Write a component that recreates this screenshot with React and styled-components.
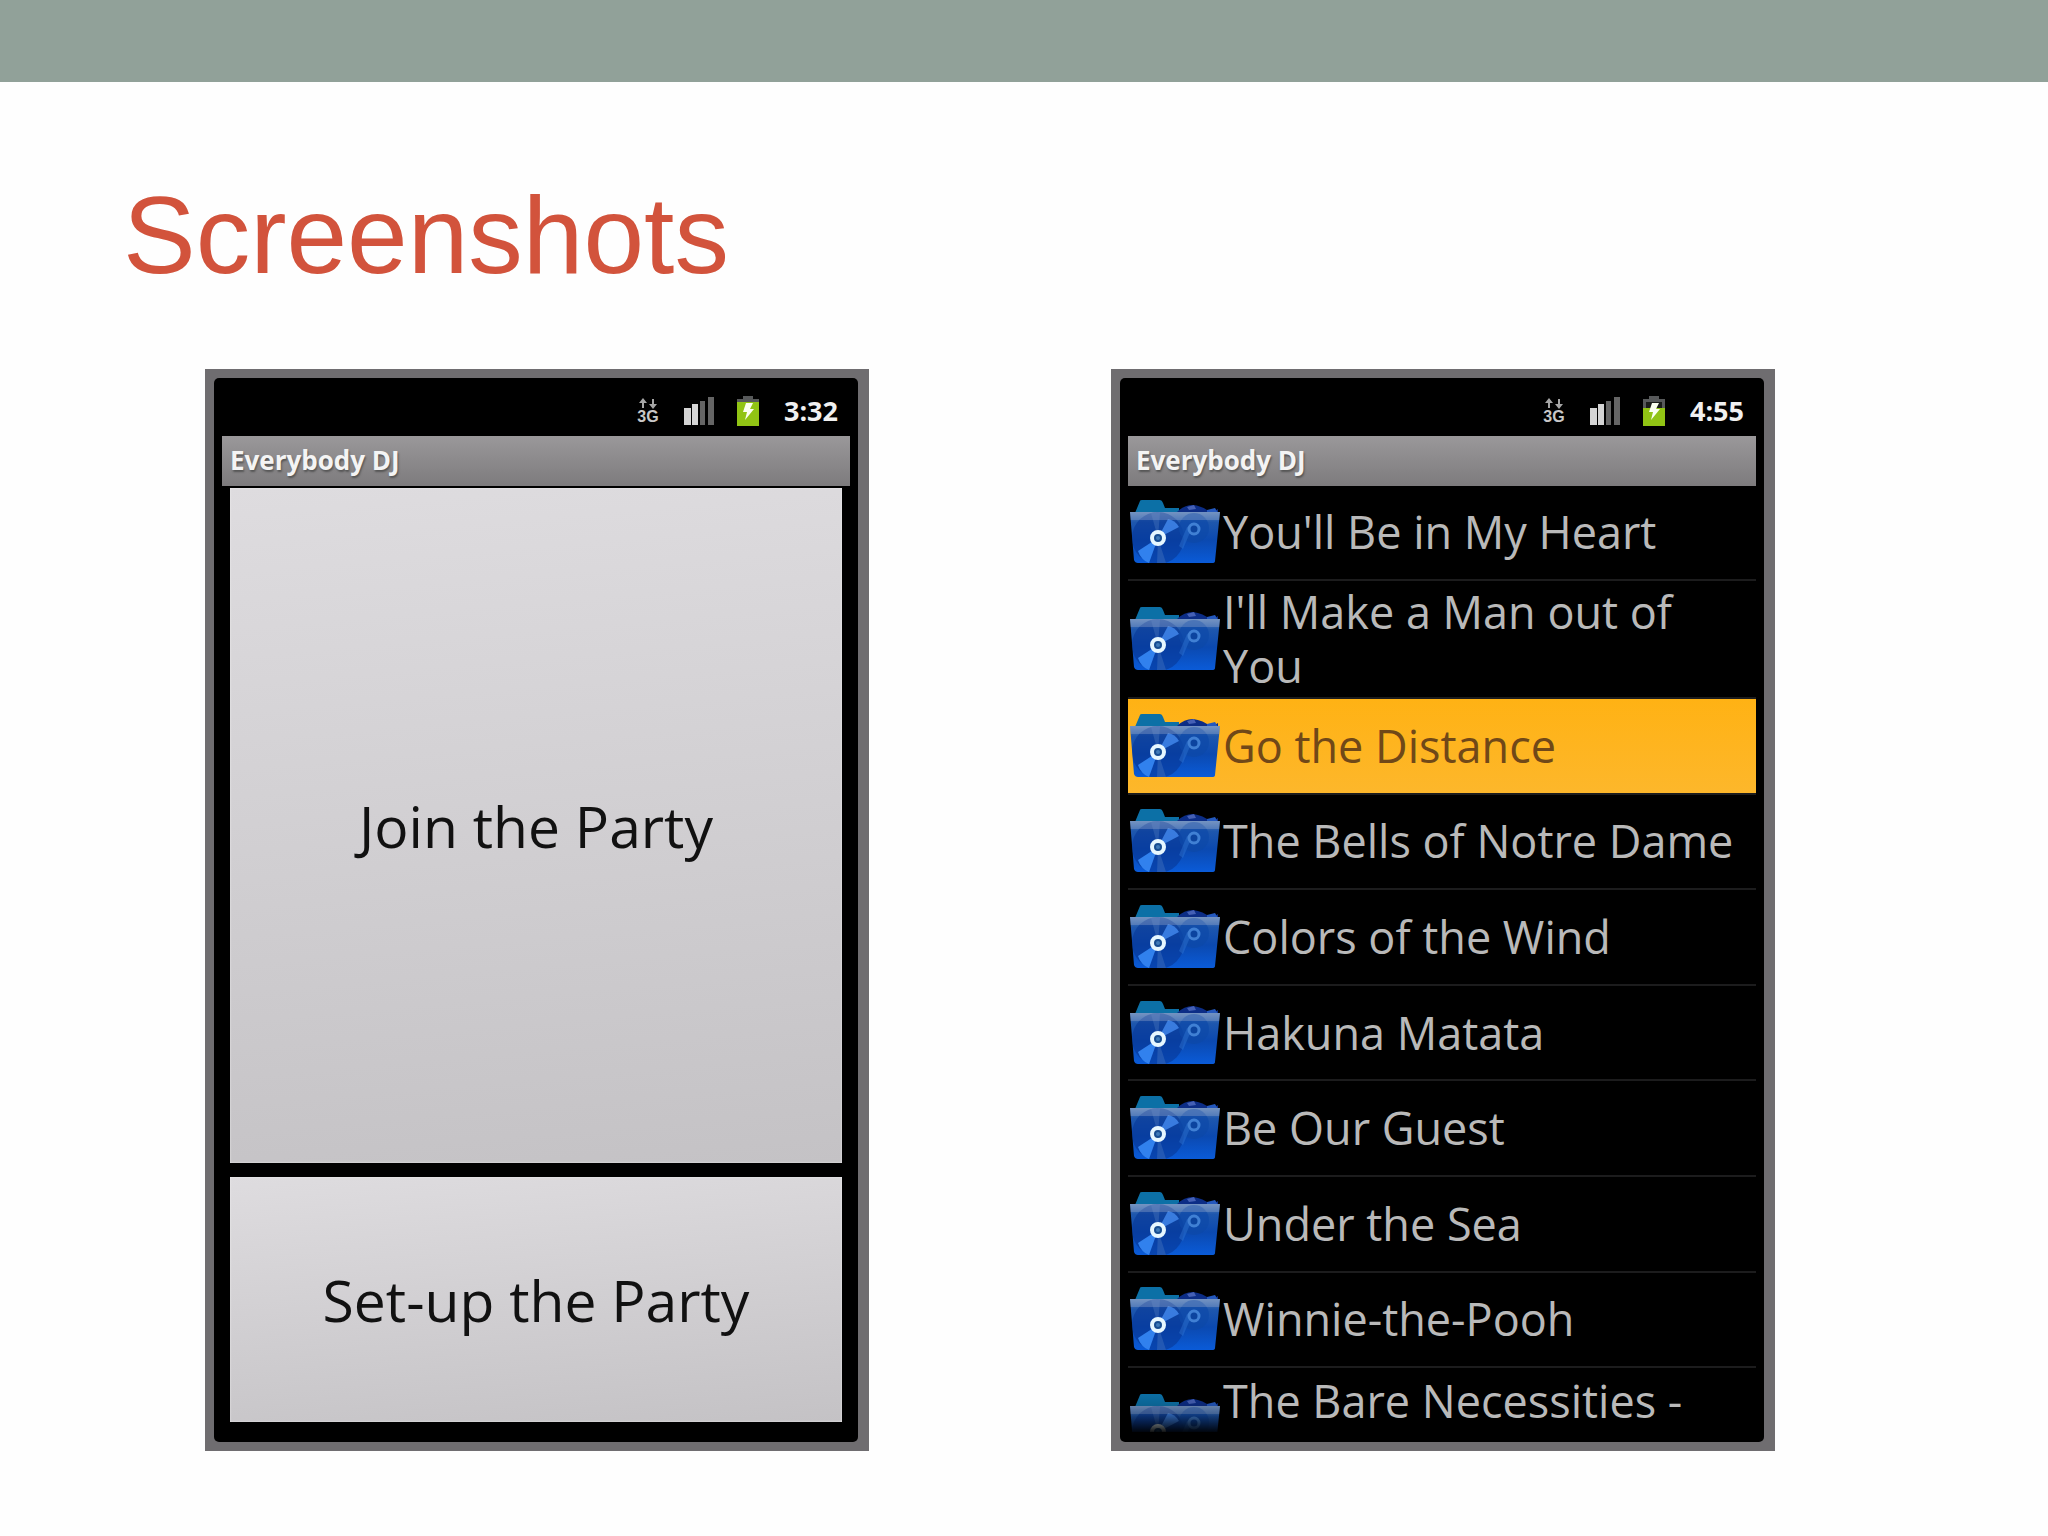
import React from 'react';
import { useId } from 'react';
import styled, { createGlobalStyle } from 'styled-components';

const GlobalStyle = createGlobalStyle`
  * {
    box-sizing: border-box;
  }

  body {
    margin: 0;
    background: #fefefe;
    font-family: "Open Sans", "Noto Sans", sans-serif;
  }
`

const TopBar = styled.header`
  height: 82px;
  background: #91a199;
`

const Title = styled.h1`
  margin: 0;
  padding: 93px 123px 74px;
  color: #d2533c;
  font-family: "Liberation Sans", Arial, sans-serif;
  font-size: 109px;
  font-weight: 400;
  line-height: 120px;
`

const Phones = styled.main`
  display: grid;
  grid-template-columns: 1fr 1fr;
  gap: 242px;
  padding: 0 273px 85px 205px;
`

const Phone = styled.section`
  aspect-ratio: 664 / 1082;
  min-width: 0;
  padding: 9px 11px 9px 9px;
  background: #6f6d70;
`

const Screen = styled.div`
  display: flex;
  flex-direction: column;
  height: 100%;
  padding: 0 8px 8px;
  border-radius: 5px;
  background: #000;
`

const StatusBar = styled.div`
  display: flex;
  flex: none;
  align-items: center;
  justify-content: flex-end;
  height: 58px;
  padding: 8px 12px 0 0;
`

const Network = styled.div`
  display: flex;
  flex-direction: column;
  align-items: center;
  width: 22px;
  margin-right: 24px;
  color: #c8c8c8;
  font-family: "Liberation Sans", Arial, sans-serif;
  font-size: 16px;
  font-weight: 700;
  line-height: 16px;
`

const Battery = styled.svg`
  margin: 0 24px 0 21px;
`

const Time = styled.time`
  color: #f0f0f0;
  font-size: 27px;
  font-weight: 700;
  line-height: 32px;
`

const AppBar = styled.h2`
  flex: none;
  height: 50px;
  margin: 0;
  padding: 0 8px;
  background: linear-gradient(#9a989a, #7d7b7d);
  color: #f4f4f4;
  font-size: 26px;
  font-weight: 700;
  line-height: 48px;
  text-shadow: 1px 2px 2px #555;
`

const Menu = styled.div`
  display: flex;
  flex: 1;
  flex-direction: column;
  gap: 14px;
  min-height: 0;
  padding: 2px 8px 12px;
`

const MenuButton = styled.button`
  flex: ${(props) => props.$share} 1 0;
  min-height: 0;
  padding: 0;
  border: 0;
  background: linear-gradient(175deg, #dedcdf, #d1cfd2 50%, #c4c2c5);
  box-shadow: inset 0 0 2px #f4f4f4;
  color: #111;
  font-family: inherit;
  font-size: 57px;
  line-height: 68px;
`

/* the last row is cut by the bottom of the screen */
const SongList = styled.ul`
  display: grid;
  flex: 1;
  grid-template-rows: 95fr 119fr repeat(7, 96fr) 66fr;
  min-height: 0;
  margin: 0;
  padding: 0;
  list-style: none;
`

const SongItem = styled.li`
  min-height: 0;
  overflow: hidden;
  border-bottom: 2px solid ${(props) => (props.$last ? '#000' : '#1c1c1d')};
`

const Song = styled.button`
  display: flex;
  align-items: center;
  gap: 2px;
  width: 100%;
  height: ${(props) => (props.$cut ? '116px' : '100%')};
  padding: 0 0 0 1px;
  border: 0;
  background: ${(props) => (props.$active ? 'linear-gradient(#ffb214, #fdb72b)' : '#000')};
  color: ${(props) => (props.$active ? '#704818' : '#b9b9b9')};
  font-family: inherit;
  font-size: 45px;
  line-height: 54px;
  text-align: left;
`

const SongName = styled.span`
  flex: 1;
  align-self: ${(props) => (props.$cut ? 'flex-start' : 'center')};
  min-width: 0;
  padding-top: ${(props) => (props.$cut ? '6px' : '0')};
`

const FolderSvg = styled.svg`
  flex: none;
  width: 92px;
  height: 66px;
`

const songs = [
  { name: "You'll Be in My Heart" },
  { name: "I'll Make a Man out of You" },
  { name: 'Go the Distance', active: true },
  { name: 'The Bells of Notre Dame' },
  { name: 'Colors of the Wind' },
  { name: 'Hakuna Matata' },
  { name: 'Be Our Guest' },
  { name: 'Under the Sea' },
  { name: 'Winnie-the-Pooh' },
  { name: 'The Bare Necessities -', cut: true },
]

function Folder({ cut }) {
  const id = useId();

  return (
    <FolderSvg viewBox="0 0 92 66" aria-hidden="true">
      <defs>
        <linearGradient id={`${id}f`} x1="0" y1="0" x2="0" y2="1">
          <stop offset="0" stopColor="#6087bd" />
          <stop offset="0.2" stopColor="#1e57ad" />
          <stop offset="0.55" stopColor="#0b49b0" />
          <stop offset="1" stopColor="#0a5bd8" />
        </linearGradient>
        <linearGradient id={`${id}d`} x1="0" y1="0" x2="0" y2="1">
          <stop offset="0" stopColor="#000" stopOpacity="0" />
          <stop offset="0.5" stopColor="#000" stopOpacity="0.2" />
          <stop offset="1" stopColor="#000" />
        </linearGradient>
        <clipPath id={`${id}c`}>
          <path d="M1 13H91L86 62Q86 64 83 64H9Q6 64 5 61Z" />
        </clipPath>
      </defs>
      <path d="M6 14L11 2Q11 1 13 1H31Q33 1 34 4L36 9H50V18H5Z" fill="#0c70a6" />
      <path d="M48 13Q55 6 64 6Q74 7 82 14L89 10V16H46Z" fill="#0c2d86" />
      <path d="M58 8L65 6L67 10L60 11Z" fill="#4560b5" />
      <path d="M78 11L86 9L89 14H78Z" fill="#2458bd" />
      <path d="M1 13H91L86 62Q86 64 83 64H9Q6 64 5 61Z" fill={`url(#${id}f)`} />
      <g clipPath={`url(#${id}c)`}>
        <circle cx="29" cy="39" r="26" fill="#073796" opacity="0.6" />
        <circle cx="65" cy="29" r="15" fill="#0d48a8" opacity="0.7" />
        <path d="M29 39L39 20Q46 21 50 28Z" fill="#4c94fa" opacity="0.7" />
        <path d="M29 39L9 52Q12 61 20 64Z" fill="#3c91ff" opacity="0.8" />
        <path d="M29 39L22 14L31 13Z" fill="#4c79bd" opacity="0.4" />
        <path d="M29 39L28 65L37 64Z" fill="#4c79bd" opacity="0.4" />
        <path d="M62 31L54 50L50 47L58 28Z" fill="#347bd8" opacity="0.4" />
        <rect x="1" y="13" width="90" height="8" fill="#9aabcb" opacity="0.35" />
      </g>
      <circle cx="65" cy="30" r="5" fill="#0c449f" stroke="#4080d4" strokeWidth="3" />
      <circle cx="29" cy="39" r="6" fill="#174d91" stroke="#e6f7ff" strokeWidth="4" />
      <circle cx="29" cy="39" r="2" fill="#3f7ab8" />
      {cut && <rect width="92" height="41" fill={`url(#${id}d)`} />}
    </FolderSvg>
  )
}

function Status({ time, charge }) {
  return (
    <StatusBar>
      <Network>
        <svg width="22" height="11" viewBox="0 0 22 11" aria-hidden="true">
          <path d="M6 0L10 5H7V10H5V5H2ZM16 11L12 6H15V1H17V6H20Z" fill="#a5a5a5" />
        </svg>
        3G
      </Network>
      <svg width="32" height="30" viewBox="0 0 32 30" aria-hidden="true">
        <path d="M1 12H8V29H1ZM9 8H15V29H9Z" fill="#d4d4d4" />
        <path d="M17 5H22V29H17ZM25 1H31V29H25Z" fill="#656565" />
      </svg>
      <Battery width="24" height="32" viewBox="0 0 24 32" aria-hidden="true">
        <path d="M1 4H7V1H17V4H23V31H1Z" fill="#57595a" />
        <path d="M4 7H20V14H4Z" fill="#1b1d1a" />
        <rect x="1" y={31 - charge} width="22" height={charge} fill="#91c414" />
        <path d="M10 8H17L14 14H18L9 25L11 17H7Z" fill="#fbfff0" />
      </Battery>
      <Time>{time}</Time>
    </StatusBar>
  )
}

function App() {
  return (
    <>
      <GlobalStyle />
      <TopBar />
      <Title>Screenshots</Title>
      <Phones>
        <Phone>
          <Screen>
            <Status time="3:32" charge={24} />
            <AppBar>Everybody DJ</AppBar>
            <Menu>
              <MenuButton type="button" $share={675}>Join the Party</MenuButton>
              <MenuButton type="button" $share={245}>Set-up the Party</MenuButton>
            </Menu>
          </Screen>
        </Phone>
        <Phone>
          <Screen>
            <Status time="4:55" charge={18} />
            <AppBar>Everybody DJ</AppBar>
            <SongList>
              {songs.map((song) => (
                <SongItem key={song.name} $last={song.cut}>
                  <Song type="button" $active={song.active} $cut={song.cut}>
                    <Folder cut={song.cut} />
                    <SongName $cut={song.cut}>{song.name}</SongName>
                  </Song>
                </SongItem>
              ))}
            </SongList>
          </Screen>
        </Phone>
      </Phones>
    </>
  )
}


export default App;
